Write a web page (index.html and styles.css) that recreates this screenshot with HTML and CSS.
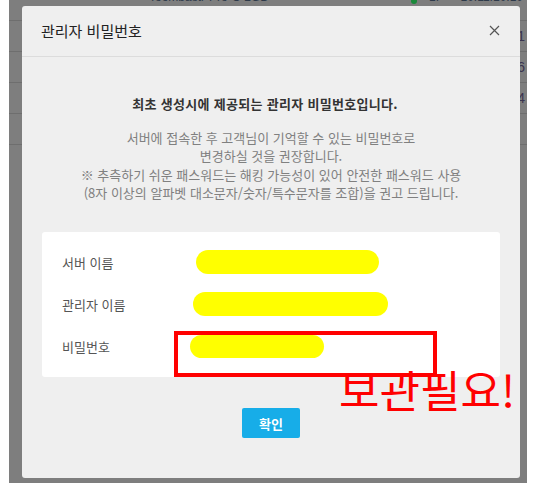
FILE: index.html
```html
<!DOCTYPE html>
<html lang="ko">
<head>
<meta charset="utf-8">
<link rel="stylesheet" href="styles.css">
</head>
<body>
<div class="page">
  <div class="backdrop">
    <div class="bg-row first"><span class="c1">Toombastr-Pro-C-2GB-Memory</span><span class="dot"></span><span class="c2">1. 111</span><span class="c3">10.11.10.10</span></div>
    <div class="bg-row"><span class="c4">1</span></div>
    <div class="bg-row"><span class="c4">6</span></div>
    <div class="bg-row"><span class="c4">4</span></div>
    <div class="bg-row"></div>
  </div>
  <div class="modal">
    <div class="modal-header">
      <span class="modal-title">관리자 비밀번호</span>
      <span class="close">
        <svg width="11" height="11" viewBox="0 0 11 11"><path d="M1 1L10 10M10 1L1 10" stroke="#555" stroke-width="1.2" fill="none"/></svg>
      </span>
    </div>
    <div class="modal-body">
      <p class="lead">최초 생성시에 제공되는 관리자 비밀번호입니다.</p>
      <p class="desc">서버에 접속한 후 고객님이 기억할 수 있는 비밀번호로<br>변경하실 것을 권장합니다.<br>※ 추측하기 쉬운 패스워드는 해킹 가능성이 있어 안전한 패스워드 사용<br>(8자 이상의 알파벳 대소문자/숫자/특수문자를 조합)을 권고 드립니다.</p>
      <div class="card">
        <div class="row"><span class="label">서버 이름</span><span class="mark m1"></span></div>
        <div class="row"><span class="label">관리자 이름</span><span class="mark m2"></span></div>
        <div class="row"><span class="label">비밀번호</span><span class="mark m3"></span></div>
        <div class="red-box"></div>
      </div>
      <div class="actions"><button class="ok">확인</button></div>
      <div class="note">보관필요!</div>
    </div>
  </div>
</div>
</body>
</html>
```
FILE: styles.css
```css
* { box-sizing: border-box; }
html, body { margin: 0; padding: 0; background: #ffffff; }
body { font-family: "Noto Sans CJK KR", "Noto Sans", sans-serif; }

.page {
  position: relative;
  margin-left: 9px;
  width: 518px;
  height: 483px;
  background: #7e7e7e;
  overflow: hidden;
}

.backdrop { display: flex; flex-direction: column; }
.bg-row {
  height: 31px;
  border-bottom: 1px solid #6e6e6e;
  position: relative;
  font-family: "Liberation Sans", sans-serif;
  font-size: 12px;
  color: #2e3a4a;
  display: flex;
  align-items: center;
}
.bg-row.first { height: 21px; align-items: flex-start; }
.bg-row .c1 { margin-left: 140px; margin-top: -10px; }
.bg-row .dot { width: 6px; height: 6px; border-radius: 50%; background: #1a8a3a; margin-left: 96px; margin-top: -2px; }
.bg-row .c2 { margin-left: 12px; margin-top: -10px; }
.bg-row .c3 { margin-left: auto; margin-right: 4px; margin-top: -10px; }
.bg-row .c4 { margin-left: auto; margin-right: 2px; font-size: 14px; color: #3b3550; }

.modal {
  position: absolute;
  left: 13px;
  top: 6px;
  width: 498px;
  height: 472px;
  background: #efefef;
  border-radius: 3px;
  display: flex;
  flex-direction: column;
}

.modal-header {
  height: 51px;
  border-bottom: 1px solid #dcdcdc;
  display: flex;
  align-items: center;
  padding: 0 20px 2px 19px;
}
.modal-title { font-size: 15px; color: #222; flex: 1; }
.close { display: flex; }

.modal-body {
  position: relative;
  padding: 38px 20px 0;
  display: flex;
  flex-direction: column;
  align-items: center;
}
.lead {
  margin: 0 12px 0 0;
  font-size: 13px;
  font-weight: 700;
  line-height: 18px;
  letter-spacing: 0.3px;
  color: #333;
}
.desc {
  margin: 16px 0 0;
  font-size: 13px;
  line-height: 18.3px;
  color: #808080;
  text-align: center;
}

.card {
  position: relative;
  margin-top: 30px;
  width: 458px;
  background: #fff;
  border-radius: 3px;
  padding: 9px 20px 10px;
}
.row { height: 42px; display: flex; align-items: center; }
.label { width: 131px; font-size: 13px; color: #555; }
.mark { display: block; height: 24px; border-radius: 12px; background: #ffff00; }
.m1 { width: 183px; margin-left: 3px; }
.m2 { width: 195px; }
.m3 { width: 134px; margin-left: -3px; height: 23px; }

.red-box {
  position: absolute;
  left: 132px;
  top: 99px;
  width: 263px;
  height: 46px;
  border: 4px solid #ff0000;
}

.actions { margin-top: 31px; display: flex; justify-content: center; }
.ok {
  width: 58px;
  height: 30px;
  border: none;
  border-radius: 2px;
  background: #17ade8;
  color: #fff;
  font-family: "Noto Sans CJK KR", sans-serif;
  font-size: 13px;
  font-weight: 700;
  padding: 0;
}

.note {
  position: absolute;
  left: 317px;
  top: 310px;
  font-size: 44px;
  line-height: 1;
  color: #ff0000;
  white-space: nowrap;
}
```
